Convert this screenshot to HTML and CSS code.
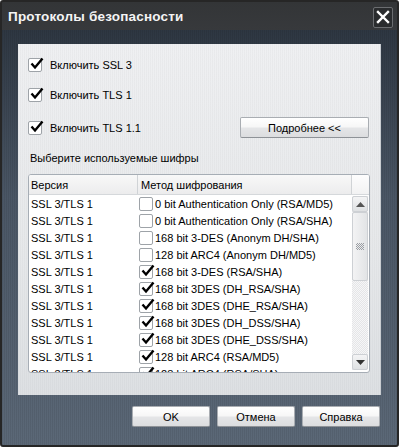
FILE: index.html
```html
<!DOCTYPE html>
<html lang="ru">
<head>
  <meta charset="UTF-8" />
  <title>Протоколы безопасности</title>
  <link rel="stylesheet" href="styles.css">
</head>
<body>
  <div class="window">
    <div class="titlebar">
      <span class="title">Протоколы безопасности</span>
      <button class="close-btn">
        <svg width="14" height="14" viewBox="0 0 14 14"><path d="M2 2 L12 12 M12 2 L2 12" stroke="#fff" stroke-width="2.4" stroke-linecap="square"/></svg>
      </button>
    </div>
    <div class="client">
      <div class="panel">
        <label class="opt"><span class="check on"></span>Включить SSL 3</label>
        <label class="opt"><span class="check on"></span>Включить TLS 1</label>
        <div class="opt-row">
          <label class="opt"><span class="check on"></span>Включить TLS 1.1</label>
          <button class="btn more">Подробнее &lt;&lt;</button>
        </div>
        <div class="caption">Выберите используемые шифры</div>
        <div class="listbox">
          <div class="list-head">
            <div class="col-ver">Версия</div>
            <div class="col-method">Метод шифрования</div>
            <div class="head-corner"></div>
          </div>
          <div class="list-body">
            <div class="rows" id="rows"></div>
            <div class="scrollbar">
              <div class="sb-btn"><svg width="9" height="5" viewBox="0 0 9 5"><path d="M0 5 L4.5 0 L9 5 Z" fill="#555"/></svg></div>
              <div class="sb-thumb"><span class="grip"></span></div>
              <div class="sb-track"></div>
              <div class="sb-btn"><svg width="9" height="5" viewBox="0 0 9 5"><path d="M0 0 L4.5 5 L9 0 Z" fill="#333"/></svg></div>
            </div>
          </div>
        </div>
      </div>
      <div class="buttons">
        <button class="btn">OK</button>
        <button class="btn">Отмена</button>
        <button class="btn">Справка</button>
      </div>
    </div>
  </div>
  <script>
const ciphers = [
  ["0 bit Authentication Only (RSA/MD5)", false],
  ["0 bit Authentication Only (RSA/SHA)", false],
  ["168 bit 3-DES (Anonym DH/SHA)", false],
  ["128 bit ARC4 (Anonym DH/MD5)", false],
  ["168 bit 3-DES (RSA/SHA)", true],
  ["168 bit 3DES (DH_RSA/SHA)", true],
  ["168 bit 3DES (DHE_RSA/SHA)", true],
  ["168 bit 3DES (DH_DSS/SHA)", true],
  ["168 bit 3DES (DHE_DSS/SHA)", true],
  ["128 bit ARC4 (RSA/MD5)", true],
  ["128 bit ARC4 (RSA/SHA)", true]
];

const rows = document.getElementById("rows");
ciphers.forEach(([name, on]) => {
  const row = document.createElement("div");
  row.className = "row";
  row.innerHTML = `<div class="col-ver">SSL 3/TLS 1</div>
    <div class="col-method"><span class="check small${on ? " on" : ""}"></span>${name}</div>`;
  rows.appendChild(row);
});
</script>
</body>
</html>
```

FILE: styles.css
```css
body {
  margin: 0;
  font-family: "Liberation Sans", Arial, sans-serif;
  font-size: 11px;
  color: #000;
  background: #fff;
}
.window {
  width: 399px;
  height: 447px;
  box-sizing: border-box;
  border: 2px solid #262626;
  border-radius: 3px;
  background: #2b2c2e;
  display: flex;
  flex-direction: column;
  overflow: hidden;
}
.titlebar {
  height: 28px;
  display: flex;
  align-items: center;
  justify-content: space-between;
  padding: 0 4px 0 6px;
  background: linear-gradient(#333537, #37393c);
}
.title {
  color: #f4f4f4;
  font-weight: bold;
  font-size: 13.5px;
  letter-spacing: 0.2px;
}
.close-btn {
  width: 20px;
  height: 21px;
  padding: 0;
  margin-top: 2px;
  border: 1px solid #6b6d70;
  border-radius: 2px;
  background: #2a2c2e;
  display: flex;
  align-items: center;
  justify-content: center;
}
.client {
  flex: 1;
  padding: 14px 16px 0 16px;
  background:
    repeating-linear-gradient(90deg, rgba(0,0,0,0.07) 0 1px, transparent 1px 2px),
    linear-gradient(#2e3742, #4a5665 40%, #5b6877);
}
.panel {
  height: 351px;
  box-sizing: border-box;
  padding: 13px 11px 0 10px;
  background:
    repeating-linear-gradient(90deg, rgba(0,0,0,0.025) 0 1px, transparent 1px 2px),
    linear-gradient(#eff0f2, #e6e8ea 60%, #dde0e3);
  border-right: 1px solid #c8ccd0;
}
.opt {
  display: flex;
  align-items: center;
  height: 16px;
  margin-bottom: 14px;
}
.opt-row {
  display: flex;
  justify-content: space-between;
  align-items: center;
  margin-bottom: 14px;
}
.opt-row .opt {
  margin-bottom: 0;
}
.check {
  width: 12px;
  height: 12px;
  border: 1px solid #9ea3a8;
  border-radius: 2px;
  background: #fff;
  margin-right: 8px;
  position: relative;
  flex: none;
}
.check.on::after {
  content: "";
  position: absolute;
  left: 1px;
  top: -2px;
  width: 14px;
  height: 13px;
  background: url("data:image/svg+xml;utf8,<svg xmlns='http://www.w3.org/2000/svg' viewBox='0 0 14 13'><path d='M1.5 6.5 L5 10.5 L12.5 1.5' fill='none' stroke='black' stroke-width='2.4'/></svg>") no-repeat;
}
.check.small {
  margin-right: 2px;
}
.btn {
  font-family: "Liberation Sans", Arial, sans-serif;
  font-size: 11px;
  font-weight: normal;
  color: #000;
  height: 21px;
  width: 78px;
  padding: 0;
  border: 1px solid #a9adb2;
  border-bottom-color: #8e9297;
  border-radius: 2px;
  background: linear-gradient(#ffffff, #f7f7f7 45%, #e4e5e7 55%, #dcdddf);
}
.btn.more {
  width: 129px;
}
.caption {
  margin-bottom: 10px;
  padding-left: 2px;
}
.listbox {
  width: 342px;
  height: 199px;
  box-sizing: border-box;
  border: 1px solid #a6adb5;
  border-radius: 3px;
  background: #fff;
  overflow: hidden;
}
.list-head {
  display: flex;
  height: 19px;
  align-items: center;
  border-bottom: 1px solid #d5d8db;
  background: linear-gradient(#f8f8f8, #ececed);
}
.col-ver {
  width: 106px;
  padding-left: 2px;
  flex: none;
}
.col-method {
  flex: 1;
  display: flex;
  align-items: center;
  white-space: nowrap;
}
.list-head .col-method {
  border-left: 1px solid #d0d3d6;
  padding-left: 3px;
  height: 19px;
}
.head-corner {
  width: 17px;
  height: 19px;
  border-left: 1px solid #d0d3d6;
  background: linear-gradient(#fdfdfd, #f2f2f3);
}
.list-body {
  display: flex;
  height: 177px;
}
.rows {
  flex: 1;
  overflow: hidden;
}
.row {
  display: flex;
  height: 17px;
  align-items: center;
}
.row .col-method {
  padding-left: 2px;
}
.scrollbar {
  width: 16px;
  margin: 1px 1px 2px 0;
  display: flex;
  flex-direction: column;
  background:
    repeating-conic-gradient(#e4e5e7 0 25%, #f6f6f7 0 50%) 0 0 / 2px 2px;
}
.sb-btn {
  height: 16px;
  display: flex;
  align-items: center;
  justify-content: center;
  border: 1px solid #cdd0d4;
  box-sizing: border-box;
  border-radius: 2px;
  background: linear-gradient(#f4f4f5, #dfe1e3);
}
.sb-thumb {
  height: 69px;
  box-sizing: border-box;
  border: 1px solid #cdd0d4;
  border-radius: 2px;
  background: linear-gradient(90deg, #f3f3f4, #e2e4e6);
  display: flex;
  align-items: center;
  justify-content: center;
}
.grip {
  width: 8px;
  height: 7px;
  background:
    repeating-conic-gradient(#9a9ea3 0 25%, transparent 0 50%) 0 0 / 2px 2px;
}
.sb-track {
  flex: 1;
}
.buttons {
  display: flex;
  justify-content: flex-end;
  gap: 7px;
  padding: 11px 1px 0 0;
}
```
